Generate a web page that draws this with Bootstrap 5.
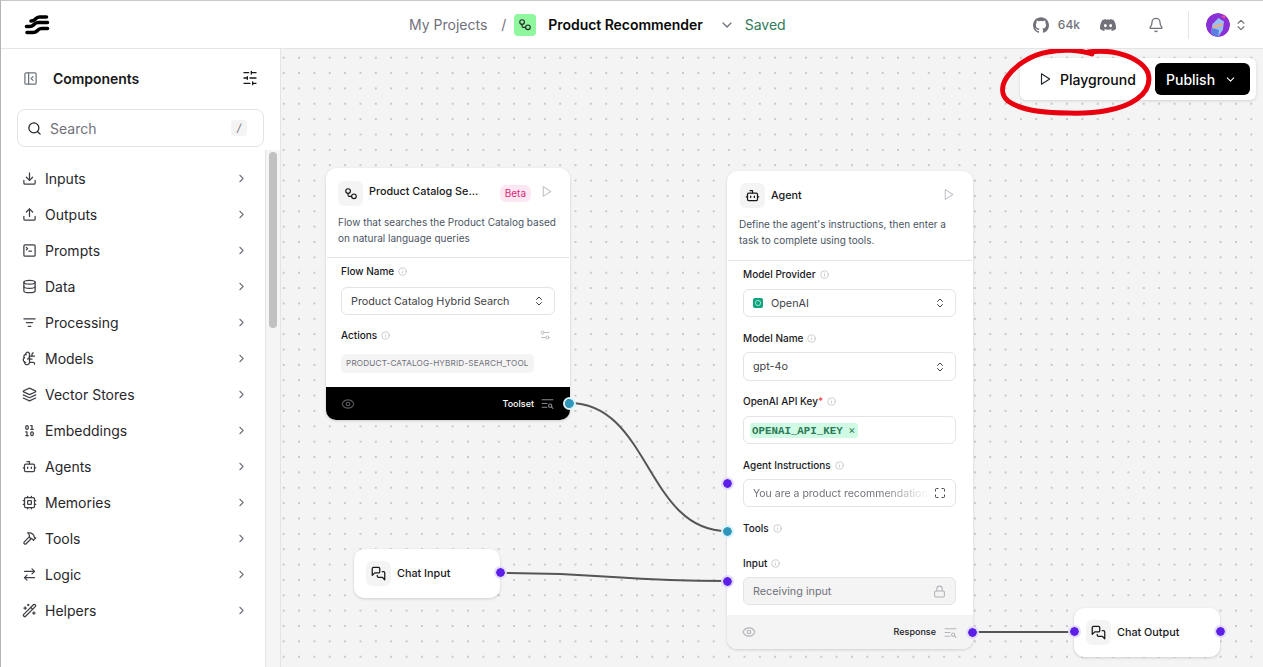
<!DOCTYPE html>
<html lang="en">
<head>
<meta charset="UTF-8">
<meta name="viewport" content="width=device-width, initial-scale=1.0">
<title>Product Recommender</title>
<link href="https://cdn.jsdelivr.net/npm/bootstrap@5.3.0/dist/css/bootstrap.min.css" rel="stylesheet">
<style>
  html, body { height: 100%; overflow: hidden; }
  body { font-family: Inter, "Liberation Sans", sans-serif; color: #18181b; background: #fff; border-top: 1px solid #c9c9c9; border-left: 1px solid #b4b4b4; }
  .ic { fill: none; stroke: currentColor; stroke-width: 2; stroke-linecap: round; stroke-linejoin: round; flex: none; display: block; }
  .ic-fill { fill: currentColor; stroke: none; flex: none; display: block; }

  /* header */
  .topbar { height: 48px; border-bottom: 1px solid #e4e4e7; flex: none; }
  .logo-slot { width: 408px; padding-left: 23px; }
  .crumb { font-size: 14px; color: #71717a; }
  .crumb-slash { font-size: 14px; color: #71717a; margin: 0 8px 0 14px; }
  .flow-chip { width: 22px; height: 22px; border-radius: 4px; background: #8ff79d; color: #27272a; margin-right: 12px; }
  .flow-title { font-size: 14px; font-weight: 600; color: #0a0a0a; letter-spacing: -.05px; }
  .saved { font-size: 14px; color: #2f7a5a; margin-left: 10px; }
  .top-right { margin-left: auto; padding-right: 15px; color: #71717a; }
  .stars { font-size: 12px; font-weight: 500; margin-left: 9px; margin-right: 20px; }
  .bell-gap { margin-left: 32px; }
  .vsep { width: 1px; height: 28px; background: #e4e4e7; margin: 0 17px 0 24px; }
  .avatar { width: 24px; height: 24px; border-radius: 50%; margin-right: 4px; }

  /* sidebar */
  .side { width: 280px; flex: none; border-right: 1px solid #e4e4e7; }
  .side-head { height: 60px; padding: 0 22px 2px; }
  .side-title { font-size: 14px; font-weight: 600; color: #18181b; margin-left: 15px; letter-spacing: -.05px; }
  .searchbox { margin: 0 16px 0 16px; width: 247px; height: 38px; border: 1px solid #e4e4e7; border-radius: 8px; padding: 0 16px 0 9px; font-size: 14px; color: #71717a; flex: none; }
  .slash-key { width: 16px; height: 16px; background: #f4f4f5; border-radius: 3px; font-size: 11px; line-height: 16px; text-align: center; font-style: italic; }
  .side-body { flex: 1; min-height: 0; margin-top: 3px; }
  .cat-list { width: 265px; padding-top: 10px; border-right: 1px solid #e4e4e7; }
  .cat-row { height: 36px; padding: 0 17px 0 21px; font-size: 14px; color: #27272a; }
  .cat-row .ic { color: #3f3f46; }
  .cat-row .cat-name { margin-left: 8px; flex: 1; }
  .cat-row .go { color: #71717a; }
  .scroll-rail { flex: 1; background: #f5f5f6; padding: 2px 3px 0 3px; }
  .scroll-thumb { height: 176px; border-radius: 4px; background: #c1c1c1; width: 8px; }

  /* canvas */
  .flowboard { flex: 1; position: relative; overflow: hidden; background-color: #f4f4f5; background-image: radial-gradient(circle, #c6c6cb 0.7px, transparent 1px); background-size: 15.36px 15.36px; background-position: -5px 1px; }
  .wires { position: absolute; left: 0; top: 0; width: 982px; height: 618px; }
  .fnode { position: absolute; background: #fff; border-radius: 10px; box-shadow: 0 1px 3px rgba(0,0,0,.16); border: 1px solid #fff; }
  .fnode-a { left: 45px; top: 119px; width: 244px; height: 252px; }
  .fnode-b { left: 446px; top: 122px; width: 246px; height: 478px; }
  .fnode-c { left: 73px; top: 500px; width: 146px; height: 49px; padding: 0 11px; }
  .fnode-d { left: 793px; top: 559px; width: 146px; height: 49px; padding: 0 11px; }
  .nicon { width: 25px; height: 25px; border-radius: 6px; background: #f4f4f5; color: #18181b; flex: none; }
  .ntitle { font-size: 10.8px; font-weight: 500; color: #18181b; margin-left: 6px; white-space: nowrap; }
  .ntitle-b { margin-top: 2px; }
  .ntitle-c { margin-top: 1px; }
  .beta-tag { background: #fce7f3; color: #db2777; font-size: 10px; height: 17px; line-height: 17px; padding: 0 5px; border-radius: 6px; margin-left: auto; margin-right: 9px; }
  .run { color: #c4c4c9; }
  .run-b { margin-top: 5px; }
  .nhead-a { padding: 12px 16px 0 11px; height: 35px; }
  .nhead-b { padding: 11px 17px 0 12px; height: 34px; }
  .ndesc { font-size: 10px; line-height: 16px; color: #4b5563; padding: 10px 0 12px 11px; border-bottom: 1px solid #e4e4e7; white-space: nowrap; }
  .ndesc-a { padding-bottom: 11px; }
  .nfields-a { padding: 0 14px; }
  .nfields-b { padding: 0 16px 0 15px; }
  .flabel { font-size: 10px; font-weight: 500; color: #18181b; height: 16px; line-height: 16px; white-space: nowrap; }
  .flabel .ic { color: #bdbdc3; margin-left: 4px; }
  .req { color: #ef4444; }
  .fbox { height: 28px; border: 1px solid #e4e4e7; border-radius: 6px; padding: 0 9px; font-size: 10.8px; color: #3f3f46; background: #fff; white-space: nowrap; overflow: hidden; }
  .fbox-tall { height: 29px; }
  .fbox .ic { color: #3f3f46; }
  .fbox-txt { margin-top: 2px; }
  .fbox-off { background: #f4f4f5; color: #71717a; }
  .fbox-off .ic { color: #b4b4ba; }
  .ai-mark { margin-right: 8px; }
  .key-chip { background: #d1fae5; color: #2b7a55; font-family: "Liberation Mono", monospace; font-size: 10.8px; font-weight: 700; height: 15px; line-height: 15px; padding: 0 3px 0 2px; border-radius: 3px; margin-left: -3px; }
  .key-chip span { font-family: Inter, sans-serif; font-weight: 400; margin-left: -1px; }
  .fade-text { flex: 1; overflow: hidden; font-size: 10.5px; color: #71717a; -webkit-mask-image: linear-gradient(90deg, #000 72%, transparent); mask-image: linear-gradient(90deg, #000 72%, transparent); }
  .tool-tag { font-size: 8.2px; letter-spacing: .15px; height: 19px; line-height: 19px; padding: 0 5px; background: #f4f4f5; color: #71717a; border-radius: 5px; white-space: nowrap; }
  .nfoot { position: absolute; left: -1px; right: -1px; bottom: -1px; height: 34px; border-radius: 0 0 10px 10px; padding: 0 16px 0 15px; }
  .nfoot-dark { background: #000; color: #fff; height: 33px; }
  .nfoot-dark .dim { color: #55555b; }
  .nfoot-dark .lit { color: #8b8b92; }
  .nfoot-soft { background: #f4f4f5; color: #18181b; }
  .nfoot-soft .dim, .nfoot-soft .lit { color: #b4b4ba; }
  .nfoot-label { font-size: 9px; font-weight: 500; margin-left: auto; margin-right: 7px; }
  .nfoot-soft .nfoot-label { margin-right: 8px; }
  .hdl { position: absolute; width: 9px; height: 9px; border-radius: 50%; box-sizing: content-box; background-clip: padding-box; margin: -2px; }
  .hdl-p { background-color: #5b1fe8; border: 2px solid #e4dcfb; }
  .hdl-b { background-color: #2f95b9; border: 2px solid #d7f3fb; }
  .h-a-out { left: 238px; top: 230px; }
  .h-b-prompt { left: -5px; top: 307px; }
  .h-b-tools { left: -5px; top: 355px; }
  .h-b-input { left: -5px; top: 405px; }
  .h-b-out { left: 240px; top: 456px; }
  .h-chat-in { left: -5px; top: 18px; }
  .h-chat-out { left: 141px; top: 18px; }

  /* vertical rhythm of the node fields */
  .a-l1 { margin-top: 5px; margin-bottom: 8px; }
  .a-l2 { margin-top: 12px; margin-bottom: 11px; }
  .b-l1 { margin-top: 5px; margin-bottom: 7px; }
  .b-l { margin-top: 13px; margin-bottom: 6px; }
  .b-l3 { margin-top: 12px; margin-bottom: 7px; }
  .b-l2 { margin-top: 19px; margin-bottom: 6px; }

  /* top right floating panel */
  .actions-panel { position: absolute; left: 739px; top: 9px; width: 236px; height: 42px; background: #fff; border-radius: 6px; box-shadow: 0 1px 3px rgba(0,0,0,.14); padding: 0 6px 0 18px; }
  .pg-btn { font-size: 14px; font-weight: 500; color: #0a0a0a; }
  .pub-btn { width: 95px; height: 32px; background: #000; color: #fff; border-radius: 6px; font-size: 14px; font-weight: 500; margin-left: auto; padding: 0 13px 0 11px; }
  .scribble { position: absolute; left: 0; top: 0; width: 982px; height: 618px; pointer-events: none; }
</style>
</head>
<body class="d-flex flex-column">

<svg width="0" height="0" class="position-absolute">
  <symbol id="i-download" viewBox="0 0 24 24"><path d="M21 15v4a2 2 0 0 1-2 2H5a2 2 0 0 1-2-2v-4"/><path d="m7 10 5 5 5-5"/><path d="M12 15V3"/></symbol>
  <symbol id="i-upload" viewBox="0 0 24 24"><path d="M21 15v4a2 2 0 0 1-2 2H5a2 2 0 0 1-2-2v-4"/><path d="m17 8-5-5-5 5"/><path d="M12 3v12"/></symbol>
  <symbol id="i-terminal" viewBox="0 0 24 24"><rect x="3" y="3" width="18" height="18" rx="2"/><path d="m7 11 2-2-2-2"/><path d="M11 13h4"/></symbol>
  <symbol id="i-db" viewBox="0 0 24 24"><ellipse cx="12" cy="5" rx="9" ry="3"/><path d="M3 5V19A9 3 0 0 0 21 19V5"/><path d="M3 12A9 3 0 0 0 21 12"/></symbol>
  <symbol id="i-filter" viewBox="0 0 24 24"><path d="M3 6h18"/><path d="M7 12h10"/><path d="M10 18h4"/></symbol>
  <symbol id="i-brain" viewBox="0 0 24 24"><path d="M12 5a3 3 0 1 0-5.997.125 4 4 0 0 0-2.526 5.77 4 4 0 0 0 .556 6.588A4 4 0 1 0 12 18Z"/><path d="M9 13a4.5 4.5 0 0 0 3-4"/><path d="M6.003 5.125A3 3 0 0 0 6.401 6.5"/><path d="M3.477 10.896a4 4 0 0 1 .585-.396"/><path d="M6 18a4 4 0 0 1-1.967-.516"/><path d="M12 13h4"/><path d="M12 18h6a2 2 0 0 1 2 2v1"/><path d="M12 8h8"/><path d="M16 8V5a2 2 0 0 1 2-2"/></symbol>
  <symbol id="i-layers" viewBox="0 0 24 24"><path d="m12.83 2.18a2 2 0 0 0-1.66 0L2.6 6.08a1 1 0 0 0 0 1.83l8.58 3.91a2 2 0 0 0 1.66 0l8.58-3.9a1 1 0 0 0 0-1.83Z"/><path d="m22 17.65-9.17 4.16a2 2 0 0 1-1.66 0L2 17.65"/><path d="m22 12.65-9.17 4.16a2 2 0 0 1-1.66 0L2 12.65"/></symbol>
  <symbol id="i-binary" viewBox="0 0 24 24"><rect x="14" y="14" width="4" height="6" rx="2"/><rect x="6" y="4" width="4" height="6" rx="2"/><path d="M6 20h4"/><path d="M14 10h4"/><path d="M6 14h2v6"/><path d="M14 4h2v6"/></symbol>
  <symbol id="i-bot" viewBox="0 0 24 24"><path d="M12 8V4H8"/><rect x="4" y="8" width="16" height="12" rx="2"/><path d="M2 14h2"/><path d="M20 14h2"/><path d="M15 13v2"/><path d="M9 13v2"/></symbol>
  <symbol id="i-cpu" viewBox="0 0 24 24"><rect x="4" y="4" width="16" height="16" rx="2"/><rect x="9" y="9" width="6" height="6" rx="1"/><path d="M15 2v2M15 20v2M2 15h2M2 9h2M20 15h2M20 9h2M9 2v2M9 20v2"/></symbol>
  <symbol id="i-hammer" viewBox="0 0 24 24"><path d="m15 12-8.373 8.373a1 1 0 1 1-3-3L12 9"/><path d="m18 15 4-4"/><path d="m21.5 11.5-1.914-1.914A2 2 0 0 1 19 8.172V7l-2.26-2.26a6 6 0 0 0-4.202-1.756L9 2.96l.92.82A6.18 6.18 0 0 1 12 8.4V10l2 2h1.172a2 2 0 0 1 1.414.586L18.5 14.5"/></symbol>
  <symbol id="i-swap" viewBox="0 0 24 24"><path d="m16 3 4 4-4 4"/><path d="M20 7H4"/><path d="m8 21-4-4 4-4"/><path d="M4 17h16"/></symbol>
  <symbol id="i-wand" viewBox="0 0 24 24"><path d="m21.64 3.64-1.28-1.28a1.21 1.21 0 0 0-1.72 0L2.36 18.64a1.21 1.21 0 0 0 0 1.72l1.28 1.28a1.2 1.2 0 0 0 1.72 0L21.64 5.36a1.2 1.2 0 0 0 0-1.72"/><path d="m14 7 3 3"/><path d="M5 6v4"/><path d="M19 14v4"/><path d="M10 2v2"/><path d="M7 8H3"/><path d="M21 16h-4"/><path d="M11 3H9"/></symbol>
  <symbol id="i-right" viewBox="0 0 24 24"><path d="m9 18 6-6-6-6"/></symbol>
  <symbol id="i-down" viewBox="0 0 24 24"><path d="m6 9 6 6 6-6"/></symbol>
  <symbol id="i-updown" viewBox="0 0 24 24"><path d="m7 15 5 5 5-5"/><path d="m7 9 5-5 5 5"/></symbol>
  <symbol id="i-search" viewBox="0 0 24 24"><circle cx="11" cy="11" r="8"/><path d="m21 21-4.3-4.3"/></symbol>
  <symbol id="i-sliders" viewBox="0 0 24 24"><path d="M21 4h-7M10 4H3M21 12h-9M8 12H3M21 20h-5M12 20H3M14 2v4M8 10v4M16 18v4"/></symbol>
  <symbol id="i-panel" viewBox="0 0 24 24"><rect x="3" y="3" width="18" height="18" rx="2"/><path d="M9 3v18"/><path d="m16 15-3-3 3-3"/></symbol>
  <symbol id="i-flow" viewBox="0 0 24 24"><circle cx="7" cy="7" r="4"/><circle cx="17" cy="16" r="4"/><path d="M7 11v3a2 2 0 0 0 2 2h4"/></symbol>
  <symbol id="i-chat" viewBox="0 0 24 24"><path d="M14 9a2 2 0 0 1-2 2H6l-4 4V4a2 2 0 0 1 2-2h8a2 2 0 0 1 2 2z"/><path d="M18 9h2a2 2 0 0 1 2 2v11l-4-4h-6a2 2 0 0 1-2-2v-1"/></symbol>
  <symbol id="i-play" viewBox="0 0 24 24"><path d="M6 3 20 12 6 21z"/></symbol>
  <symbol id="i-eye" viewBox="0 0 24 24"><path d="M2.062 12.348a1 1 0 0 1 0-.696 10.75 10.75 0 0 1 19.876 0 1 1 0 0 1 0 .696 10.75 10.75 0 0 1-19.876 0"/><circle cx="12" cy="12" r="3"/></symbol>
  <symbol id="i-info" viewBox="0 0 24 24"><circle cx="12" cy="12" r="10"/><path d="M12 16v-4"/><path d="M12 8h.01"/></symbol>
  <symbol id="i-tune" viewBox="0 0 24 24"><path d="M20 7h-9"/><path d="M14 17H5"/><circle cx="17" cy="17" r="3"/><circle cx="7" cy="7" r="3"/></symbol>
  <symbol id="i-lock" viewBox="0 0 24 24"><rect x="3" y="11" width="18" height="11" rx="2"/><path d="M7 11V7a5 5 0 0 1 10 0v4"/></symbol>
  <symbol id="i-max" viewBox="0 0 24 24"><path d="M8 3H5a2 2 0 0 0-2 2v3"/><path d="M21 8V5a2 2 0 0 0-2-2h-3"/><path d="M3 16v3a2 2 0 0 0 2 2h3"/><path d="M16 21h3a2 2 0 0 0 2-2v-3"/></symbol>
  <symbol id="i-bell" viewBox="0 0 24 24"><path d="M10.268 21a2 2 0 0 0 3.464 0"/><path d="M3.262 15.326A1 1 0 0 0 4 17h16a1 1 0 0 0 .74-1.673C19.41 13.956 18 12.499 18 8A6 6 0 0 0 6 8c0 4.499-1.411 5.956-2.738 7.326"/></symbol>
  <symbol id="i-toolset" viewBox="0 0 24 24"><path d="M2 5h20"/><path d="M2 12h9"/><path d="M2 19h9"/><circle cx="17" cy="16" r="3"/><path d="m22 21-2.8-2.8"/></symbol>
  <symbol id="i-github" viewBox="0 0 24 24"><path d="M12 .297c-6.63 0-12 5.373-12 12 0 5.303 3.438 9.8 8.205 11.385.6.113.82-.258.82-.577 0-.285-.01-1.04-.015-2.04-3.338.724-4.042-1.61-4.042-1.61C4.422 18.07 3.633 17.7 3.633 17.7c-1.087-.744.084-.729.084-.729 1.205.084 1.838 1.236 1.838 1.236 1.07 1.835 2.809 1.305 3.495.998.108-.776.417-1.305.76-1.605-2.665-.3-5.466-1.332-5.466-5.93 0-1.31.465-2.38 1.235-3.22-.135-.303-.54-1.523.105-3.176 0 0 1.005-.322 3.3 1.23.96-.267 1.98-.399 3-.405 1.02.006 2.04.138 3 .405 2.28-1.552 3.285-1.23 3.285-1.23.645 1.653.24 2.873.12 3.176.765.84 1.23 1.91 1.23 3.22 0 4.61-2.805 5.625-5.475 5.92.42.36.81 1.096.81 2.22 0 1.606-.015 2.896-.015 3.286 0 .315.21.69.825.57C20.565 22.092 24 17.592 24 12.297c0-6.627-5.373-12-12-12"/></symbol>
  <symbol id="i-discord" viewBox="0 0 24 24"><path d="M20.317 4.3698a19.7913 19.7913 0 00-4.8851-1.5152.0741.0741 0 00-.0785.0371c-.211.3753-.4447.8648-.6083 1.2495-1.8447-.2762-3.68-.2762-5.4868 0-.1636-.3933-.4058-.8742-.6177-1.2495a.077.077 0 00-.0785-.037 19.7363 19.7363 0 00-4.8852 1.515.0699.0699 0 00-.0321.0277C.5334 9.0458-.319 13.5799.0992 18.0578a.0824.0824 0 00.0312.0561c2.0528 1.5076 4.0413 2.4228 5.9929 3.0294a.0777.0777 0 00.0842-.0276c.4616-.6304.8731-1.2952 1.226-1.9942a.076.076 0 00-.0416-.1057c-.6528-.2476-1.2743-.5495-1.8722-.8923a.077.077 0 01-.0076-.1277c.1258-.0943.2517-.1923.3718-.2914a.0743.0743 0 01.0776-.0105c3.9278 1.7933 8.18 1.7933 12.0614 0a.0739.0739 0 01.0785.0095c.1202.099.246.1981.3728.2924a.077.077 0 01-.0066.1276 12.2986 12.2986 0 01-1.873.8914.0766.0766 0 00-.0407.1067c.3604.698.7719 1.3628 1.225 1.9932a.076.076 0 00.0842.0286c1.961-.6067 3.9495-1.5219 6.0023-3.0294a.077.077 0 00.0313-.0552c.5004-5.177-.8382-9.6739-3.5485-13.6604a.061.061 0 00-.0312-.0286zM8.02 15.3312c-1.1825 0-2.1569-1.0857-2.1569-2.419 0-1.3332.9555-2.4189 2.157-2.4189 1.2108 0 2.1757 1.0952 2.1568 2.419 0 1.3332-.9555 2.4189-2.1569 2.4189zm7.9748 0c-1.1825 0-2.1569-1.0857-2.1569-2.419 0-1.3332.9554-2.4189 2.1569-2.4189 1.2108 0 2.1757 1.0952 2.1568 2.419 0 1.3332-.946 2.4189-2.1568 2.4189Z"/></symbol>
</svg>

<!-- top bar -->
<header class="topbar d-flex align-items-center">
  <div class="logo-slot">
    <svg width="26" height="23" viewBox="24 13 26 23" class="d-block" fill="none" stroke="#000" stroke-width="3.6" stroke-linecap="round" stroke-linejoin="round">
      <path d="M31 21c2 0 3-.5 4-1.500s2-2.500 4.500-2.500H46.500"/>
      <path d="M26.500 26.500h3c2 0 3-.5 4-1.500s2-2.500 4.500-2.500H47.500"/>
      <path d="M27 32.500h6c2 0 3-.5 4-1.500s2-2.500 4.500-2.500H47.500"/>
    </svg>
  </div>
  <span class="crumb">My Projects</span>
  <span class="crumb-slash">/</span>
  <span class="flow-chip d-flex align-items-center justify-content-center"><svg class="ic" width="14" height="14"><use href="#i-flow"/></svg></span>
  <span class="flow-title">Product Recommender</span>
  <svg class="ic ms-3 text-secondary" width="16" height="16" stroke-width="1.500"><use href="#i-down"/></svg>
  <span class="saved">Saved</span>
  <div class="top-right d-flex align-items-center">
    <svg class="ic-fill" width="16" height="16"><use href="#i-github"/></svg>
    <span class="stars">64k</span>
    <svg class="ic-fill" width="16" height="16"><use href="#i-discord"/></svg>
    <svg class="ic bell-gap" width="16" height="16" stroke-width="1.500"><use href="#i-bell"/></svg>
    <span class="vsep"></span>
    <svg class="avatar" viewBox="0 0 24 24">
      <circle cx="12" cy="12" r="12" fill="#8b2fd6"/>
      <path d="M5 20l1.500-9 6-6 5.500 3.500-1 8-4.500 7a12 12 0 0 1-7.500-3.500z" fill="#93c0f7"/>
      <path d="M5 20l1-5 7 2-1 7a12 12 0 0 1-7-4z" fill="#5b7fe0"/>
      <path d="M7 13l10-3-.5 2.500-9.500 3z" fill="#f2a97a"/>
      <path d="M15 3l3.500 3 1.500-4z" fill="#ec4899"/>
    </svg>
    <svg class="ic" width="14" height="14" stroke-width="1.800"><use href="#i-updown"/></svg>
  </div>
</header>

<main class="d-flex flex-grow-1 overflow-hidden">
  <!-- components sidebar -->
  <aside class="side d-flex flex-column">
    <div class="side-head d-flex align-items-center">
      <svg class="ic text-secondary" width="15" height="15" stroke-width="1.500"><use href="#i-panel"/></svg>
      <span class="side-title">Components</span>
      <svg class="ic ms-auto" width="16" height="16" stroke-width="1.500"><use href="#i-sliders"/></svg>
    </div>
    <div class="searchbox d-flex align-items-center">
      <svg class="ic me-2 text-dark" width="15" height="15" stroke-width="1.500"><use href="#i-search"/></svg>
      <span class="flex-grow-1">Search</span>
      <span class="slash-key">/</span>
    </div>
    <div class="side-body d-flex">
      <div class="cat-list" id="cats"></div>
      <div class="scroll-rail"><div class="scroll-thumb"></div></div>
    </div>
  </aside>

  <!-- flow canvas -->
  <section class="flowboard">
    <svg class="wires" viewBox="281 49 982 618" fill="none" stroke="#555" stroke-width="2">
      <path d="M569 403C650 403 646 531 727 531"/>
      <path d="M500 573C613 573 613 581 727 581"/>
      <path d="M972 632H1074"/>
    </svg>

    <div class="fnode fnode-a">
      <div class="nhead-a d-flex align-items-start">
        <span class="nicon d-flex align-items-center justify-content-center"><svg class="ic" width="14" height="14" stroke-width="1.500"><use href="#i-flow"/></svg></span>
        <span class="ntitle lh-lg">Product Catalog Se...</span>
        <span class="beta-tag mt-1">Beta</span>
        <svg class="ic run mt-1" width="13" height="13" stroke-width="1.500"><use href="#i-play"/></svg>
      </div>
      <div class="ndesc ndesc-a">Flow that searches the Product Catalog based<br>on natural language queries</div>
      <div class="nfields-a">
        <div class="flabel a-l1 d-flex align-items-center">Flow Name<svg class="ic" width="9" height="9" stroke-width="1.500"><use href="#i-info"/></svg></div>
        <div class="fbox d-flex align-items-center justify-content-between"><span class="fbox-txt">Product Catalog Hybrid Search</span><svg class="ic" width="12" height="12" stroke-width="1.500"><use href="#i-updown"/></svg></div>
        <div class="flabel a-l2 d-flex align-items-center">Actions<svg class="ic" width="9" height="9" stroke-width="1.500"><use href="#i-info"/></svg><svg class="ic ms-auto me-1" width="12" height="12" stroke-width="1.500"><use href="#i-tune"/></svg></div>
        <div class="d-flex"><span class="tool-tag">PRODUCT-CATALOG-HYBRID-SEARCH_TOOL</span></div>
      </div>
      <div class="nfoot nfoot-dark d-flex align-items-center">
        <svg class="ic dim" width="14" height="14" stroke-width="1.500"><use href="#i-eye"/></svg>
        <span class="nfoot-label">Toolset</span>
        <svg class="ic lit" width="13" height="13" stroke-width="1.500"><use href="#i-toolset"/></svg>
      </div>
      <span class="hdl hdl-b h-a-out"></span>
    </div>

    <div class="fnode fnode-b">
      <div class="nhead-b d-flex align-items-start">
        <span class="nicon d-flex align-items-center justify-content-center"><svg class="ic" width="15" height="15" stroke-width="1.500"><use href="#i-bot"/></svg></span>
        <span class="ntitle ntitle-b lh-lg">Agent</span>
        <svg class="ic run run-b ms-auto" width="13" height="13" stroke-width="1.500"><use href="#i-play"/></svg>
      </div>
      <div class="ndesc">Define the agent's instructions, then enter a<br>task to complete using tools.</div>
      <div class="nfields-b">
        <div class="flabel b-l1 d-flex align-items-center">Model Provider<svg class="ic" width="9" height="9" stroke-width="1.500"><use href="#i-info"/></svg></div>
        <div class="fbox d-flex align-items-center">
          <svg class="ai-mark" width="10" height="10" viewBox="0 0 10 10"><rect width="10" height="10" rx="2" fill="#10a37f"/><circle cx="5" cy="5" r="2.600" fill="none" stroke="#9fe3cd" stroke-width="1"/></svg>
          <span class="fbox-txt flex-grow-1">OpenAI</span><svg class="ic" width="12" height="12" stroke-width="1.500"><use href="#i-updown"/></svg>
        </div>
        <div class="flabel b-l d-flex align-items-center">Model Name<svg class="ic" width="9" height="9" stroke-width="1.500"><use href="#i-info"/></svg></div>
        <div class="fbox fbox-tall d-flex align-items-center justify-content-between"><span class="fbox-txt">gpt-4o</span><svg class="ic" width="12" height="12" stroke-width="1.500"><use href="#i-updown"/></svg></div>
        <div class="flabel b-l3 d-flex align-items-center">OpenAI API Key<span class="req">*</span><svg class="ic" width="9" height="9" stroke-width="1.500"><use href="#i-info"/></svg></div>
        <div class="fbox d-flex align-items-center"><span class="key-chip">OPENAI_API_KEY <span>×</span></span></div>
        <div class="flabel b-l d-flex align-items-center">Agent Instructions<svg class="ic" width="9" height="9" stroke-width="1.500"><use href="#i-info"/></svg></div>
        <div class="fbox d-flex align-items-center"><span class="fade-text fbox-txt">You are a product recommendation</span><svg class="ic ms-1" width="12" height="12" stroke-width="1.800"><use href="#i-max"/></svg></div>
        <div class="flabel b-l d-flex align-items-center">Tools<svg class="ic" width="9" height="9" stroke-width="1.500"><use href="#i-info"/></svg></div>
        <div class="flabel b-l2 d-flex align-items-center">Input<svg class="ic" width="9" height="9" stroke-width="1.500"><use href="#i-info"/></svg></div>
        <div class="fbox fbox-off d-flex align-items-center justify-content-between"><span class="fbox-txt">Receiving input</span><svg class="ic" width="13" height="13" stroke-width="1.500"><use href="#i-lock"/></svg></div>
      </div>
      <div class="nfoot nfoot-soft d-flex align-items-center">
        <svg class="ic dim" width="14" height="14" stroke-width="1.500"><use href="#i-eye"/></svg>
        <span class="nfoot-label">Response</span>
        <svg class="ic lit" width="13" height="13" stroke-width="1.500"><use href="#i-toolset"/></svg>
      </div>
      <span class="hdl hdl-p h-b-prompt"></span>
      <span class="hdl hdl-b h-b-tools"></span>
      <span class="hdl hdl-p h-b-input"></span>
      <span class="hdl hdl-p h-b-out"></span>
    </div>

    <div class="fnode fnode-c d-flex align-items-center">
      <span class="nicon d-flex align-items-center justify-content-center"><svg class="ic" width="15" height="15" stroke-width="1.500"><use href="#i-chat"/></svg></span>
      <span class="ntitle ntitle-c">Chat Input</span>
      <span class="hdl hdl-p h-chat-out"></span>
    </div>

    <div class="fnode fnode-d d-flex align-items-center">
      <span class="nicon d-flex align-items-center justify-content-center"><svg class="ic" width="15" height="15" stroke-width="1.500"><use href="#i-chat"/></svg></span>
      <span class="ntitle ntitle-c">Chat Output</span>
      <span class="hdl hdl-p h-chat-in"></span>
      <span class="hdl hdl-p h-chat-out"></span>
    </div>

    <div class="actions-panel d-flex align-items-center">
      <svg class="ic me-2 text-dark" width="14" height="14" stroke-width="1.500"><use href="#i-play"/></svg>
      <span class="pg-btn">Playground</span>
      <div class="pub-btn d-flex align-items-center justify-content-between"><span>Publish</span><svg class="ic" width="13" height="13" stroke-width="1.800"><use href="#i-down"/></svg></div>
    </div>

    <svg class="scribble" viewBox="281 49 982 618" fill="none" stroke="#e8000f" stroke-width="5" stroke-linecap="round">
      <path d="M1092 54C1080 50 1062 49 1048 52C1030 55 1015 66 1007 77C1001 86 1001 95 1008 101C1020 110 1045 113 1068 113C1095 114 1122 110 1137 99C1147 92 1151 84 1148 73C1144 63 1130 55 1112 52C1104 51 1096 51 1088 52"/>
    </svg>
  </section>
</main>

<script>
  // sidebar categories
  const cats = [
    ["Inputs", "download"], ["Outputs", "upload"], ["Prompts", "terminal"], ["Data", "db"],
    ["Processing", "filter"], ["Models", "brain"], ["Vector Stores", "layers"], ["Embeddings", "binary"],
    ["Agents", "bot"], ["Memories", "cpu"], ["Tools", "hammer"], ["Logic", "swap"], ["Helpers", "wand"]
  ];
  document.getElementById("cats").innerHTML = cats.map(c => `
    <div class="cat-row d-flex align-items-center">
      <svg class="ic" width="15" height="15" stroke-width="1.500"><use href="#i-${c[1]}"/></svg>
      <span class="cat-name">${c[0]}</span>
      <svg class="ic go" width="13" height="13" stroke-width="1.500"><use href="#i-right"/></svg>
    </div>`).join("");
</script>
</body>
</html>
